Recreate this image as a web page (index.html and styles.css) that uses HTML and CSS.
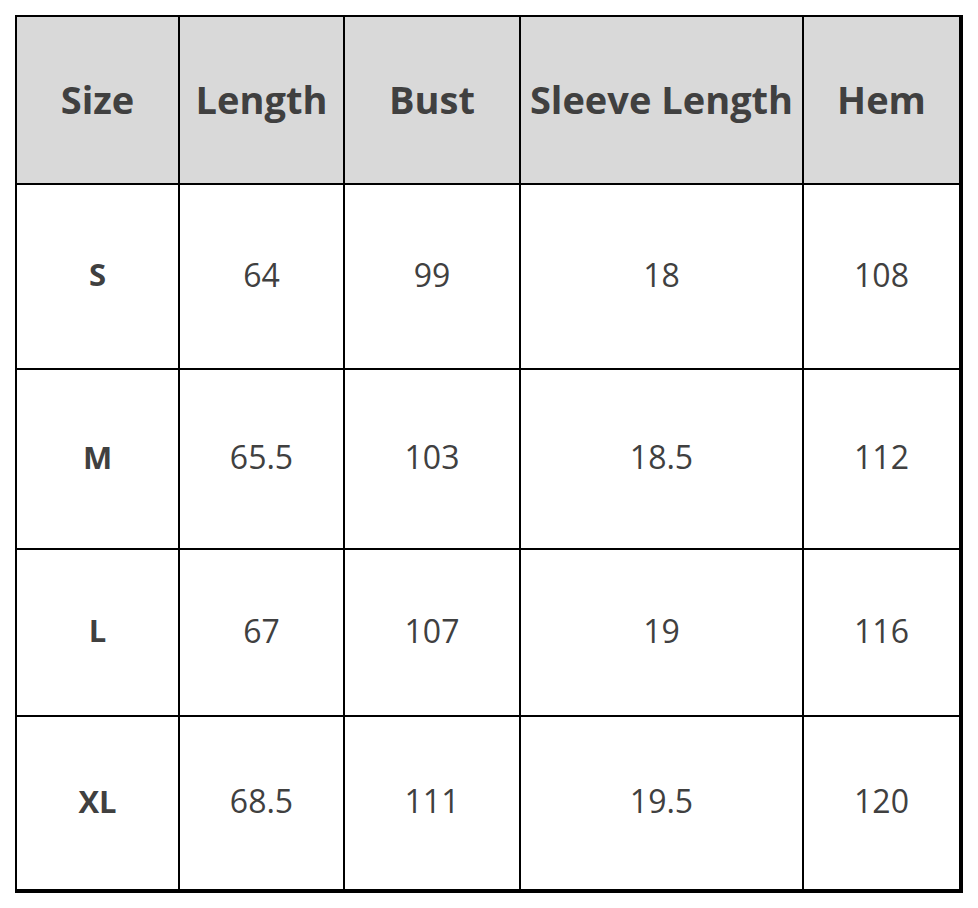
FILE: index.html
```html
<!DOCTYPE html>
<html>
<head>
<meta charset="utf-8">
<link rel="stylesheet" href="styles.css">
</head>
<body>
<div class="page">
  <div class="chart">
    <div class="cell head">Size</div>
    <div class="cell head">Length</div>
    <div class="cell head">Bust</div>
    <div class="cell head">Sleeve Length</div>
    <div class="cell head">Hem</div>

    <div class="cell label">S</div>
    <div class="cell">64</div>
    <div class="cell">99</div>
    <div class="cell">18</div>
    <div class="cell">108</div>

    <div class="cell label">M</div>
    <div class="cell">65.5</div>
    <div class="cell">103</div>
    <div class="cell">18.5</div>
    <div class="cell">112</div>

    <div class="cell label">L</div>
    <div class="cell">67</div>
    <div class="cell">107</div>
    <div class="cell">19</div>
    <div class="cell">116</div>

    <div class="cell label">XL</div>
    <div class="cell">68.5</div>
    <div class="cell">111</div>
    <div class="cell">19.5</div>
    <div class="cell">120</div>
  </div>
</div>
</body>
</html>
```
FILE: styles.css
```css
html, body {
  margin: 0;
  padding: 0;
  background: #ffffff;
}
.page {
  padding: 15px 0 0 15px;
}
.chart {
  display: inline-grid;
  grid-template-columns: 161px 163px 174px 281px 155px;
  grid-template-rows: 166px 183px 178px 165px 172px;
  gap: 2px;
  background: #000000;
  padding: 2px 4px 4px 2px;
  font-family: "Open Sans", "Noto Sans", sans-serif;
  color: #404040;
}
.cell {
  background: #ffffff;
  display: flex;
  align-items: center;
  justify-content: center;
  padding-bottom: 5px;
  font-size: 32px;
  font-weight: 400;
}
.head {
  background: #d9d9d9;
  padding-bottom: 2px;
  font-size: 38px;
  font-weight: 700;
}
.label {
  font-weight: 700;
  font-size: 31px;
}
```
